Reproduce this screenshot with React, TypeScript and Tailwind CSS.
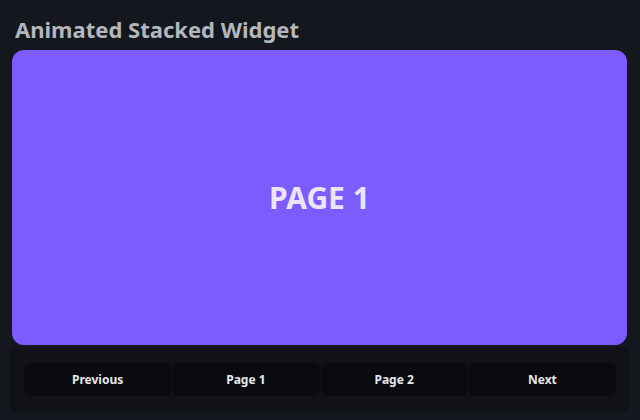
const BUTTONS = ["Previous", "Page 1", "Page 2", "Next"];

export default function App() {
  return (
    <div
      className="flex h-[420px] w-full flex-col bg-[#14171e] pl-[9px] pr-[10px]"
      style={{ fontFamily: '"Noto Sans", "Open Sans", sans-serif' }}
    >
      <div className="flex h-[50px] items-center pl-[6px] pt-[7px]">
        <h1 className="text-[22px] font-bold leading-none text-[#b3b6bd]">
          Animated Stacked Widget
        </h1>
      </div>
      <div className="mx-[3px] flex h-[295px] items-center justify-center rounded-xl bg-[#7c5cff]">
        <span className="text-[30px] font-bold text-[#e8e6f7]">PAGE 1</span>
      </div>
      <div className="mt-[2px] flex gap-px rounded-lg bg-[#101218] px-[15px] py-[16px] pr-[14px]">
        {BUTTONS.map((label) => (
          <button
            key={label}
            className="h-[33px] flex-1 rounded-md bg-[#0a0b0e] text-[12px] font-bold text-[#e5e7eb]"
          >
            {label}
          </button>
        ))}
      </div>
    </div>
  );
}
